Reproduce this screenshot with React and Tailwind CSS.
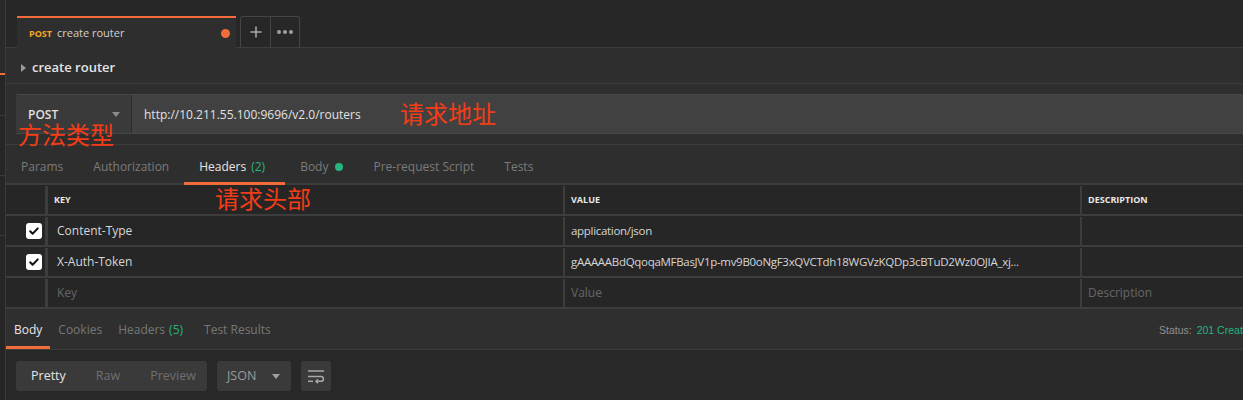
import React from 'react';

function Check() {
  return (
    <span className="flex h-4 w-4 items-center justify-center rounded-[3px] bg-white">
      <svg width="12" height="12" viewBox="0 0 12 12" fill="none">
        <path d="M2.2 6.3l2.4 2.4L9.8 3.4" stroke="#111" strokeWidth="2" strokeLinecap="round" strokeLinejoin="round" />
      </svg>
    </span>
  );
}

function Sidebar() {
  return (
    <div className="flex w-[6px] shrink-0 flex-col border-r border-[#3b3b3b] bg-[#262626]">
      <div className="h-[73px] bg-[#2a2a2a]" />
      <div className="h-[2px] bg-[#f26b3a]" />
      <div className="h-[41px] border-b border-[#3a3a3a]" />
      <div className="h-[60px] border-b border-[#3a3a3a]" />
      <div className="h-[60px] border-b border-[#3a3a3a]" />
      <div className="flex-1" />
    </div>
  );
}

const reqTabs = [
  { label: 'Params' },
  { label: 'Authorization' },
  { label: 'Headers', count: '(2)', active: true },
  { label: 'Body', dot: true },
  { label: 'Pre-request Script' },
  { label: 'Tests' },
];

const rows = [
  { checked: true, k: 'Content-Type', v: 'application/json' },
  { checked: true, k: 'X-Auth-Token', v: 'gAAAAABdQqoqaMFBasJV1p-mv9B0oNgF3xQVCTdh18WGVzKQDp3cBTuD2Wz0OJIA_xj...' },
];

function Row({ children, head }) {
  return (
    <div className={`flex h-[31px] border-b-2 border-[#3d3d3d] pt-[1px] ${head ? 'font-bold' : ''}`}>{children}</div>
  );
}

export default function App() {
  return (
    <div className="relative flex h-[400px] w-[1243px] overflow-hidden bg-[#2e2e2e] font-['Open_Sans',sans-serif] text-[#cfcfcf]">
      <Sidebar />
      <div className="flex min-w-0 flex-1 flex-col">
        {/* tab bar */}
        <div className="flex h-[48px] shrink-0 items-end border-b border-[#3d3d3d] bg-[#272727] pl-[11px]">
          <div className="relative z-10 -mb-px flex h-[32px] w-[219px] items-center border-t-2 border-[#f26b3a] bg-[#2e2e2e] pl-[12px] pr-[6px] pt-[1px]">
            <span className="text-[9px] font-bold text-[#f5a623]">POST</span>
            <span className="ml-[5px] text-[11px] text-[#d0d0d0]">create router</span>
            <span className="ml-auto h-[9px] w-[9px] rounded-full bg-[#f26b3a]" />
          </div>
          <div className="ml-[4px] flex h-[31px] rounded-t-[3px] border border-b-0 border-[#454545]">
            <div className="flex w-[30px] items-center justify-center border-r border-[#454545]">
              <svg width="12" height="12" viewBox="0 0 12 12"><path d="M6 0.5v11M0.5 6h11" stroke="#a8a8a8" strokeWidth="1.6" /></svg>
            </div>
            <div className="flex w-[28px] items-center justify-center gap-[2px]">
              <span className="h-[4px] w-[4px] rounded-full bg-[#a0a0a0]" />
              <span className="h-[4px] w-[4px] rounded-full bg-[#a0a0a0]" />
              <span className="h-[4px] w-[4px] rounded-full bg-[#a0a0a0]" />
            </div>
          </div>
        </div>

        {/* title */}
        <div className="flex h-[36px] shrink-0 items-center border-b border-[#3d3d3d] pl-[15px] pt-[4px]">
          <svg width="5" height="8" viewBox="0 0 5 8"><path d="M0 0l5 4-5 4z" fill="#9a9a9a" /></svg>
          <span className="ml-[6px] text-[13px] font-semibold text-[#e4e4e4]">create router</span>
        </div>

        {/* url bar */}
        <div className="shrink-0 border-b border-[#3d3d3d] pb-[10px] pl-[10px] pt-[10px]">
          <div className="flex h-[40px] border-y border-[#474747]">
            <div className="flex w-[115px] items-center rounded-l-[3px] bg-[#3a3a3a] pl-[12px] pr-[11px] pt-[1px]">
              <span className="text-[12px] font-semibold text-[#e0e0e0]">POST</span>
              <svg className="ml-auto" width="8" height="5" viewBox="0 0 8 5"><path d="M0 0h8L4 5z" fill="#8a8a8a" /></svg>
            </div>
            <div className="flex flex-1 items-center border-l border-[#2e2e2e] bg-[#414141] pl-[12px] pt-[1px] text-[12px] text-[#e2e2e2]">
              http://10.211.55.100:9696/v2.0/routers
            </div>
          </div>
        </div>

        {/* request tabs */}
        <div className="flex h-[40px] shrink-0 items-stretch border-b-2 border-[#3d3d3d]">
          {reqTabs.map((t) => (
            <div
              key={t.label}
              className={`-mb-[2px] flex items-center gap-[5px] border-b-[3px] pl-[15px] pt-[6px] text-[12px] ${t.count ? 'pr-[20px]' : 'pr-[15px]'} ${t.active ? 'border-[#f26b3a] text-[#e6e6e6]' : 'border-transparent text-[#7b7b7b]'}`}
            >
              <span>{t.label}</span>
              {t.count && <span className="text-[#26b47f]">{t.count}</span>}
              {t.dot && <span className="ml-[2px] h-[8px] w-[8px] rounded-full bg-[#26b47f]" />}
            </div>
          ))}
        </div>

        {/* headers table */}
        <div className="shrink-0 bg-[#262626] text-[12px]">
          <Row head>
            <div className="w-[42px] shrink-0 border-r-[3px] border-[#3d3d3d]" />
            <div className="flex w-[517px] shrink-0 items-center border-r-2 border-[#3d3d3d] pl-[6px] text-[9px] text-[#e8e8e8]">KEY</div>
            <div className="flex w-[517px] shrink-0 items-center border-r-2 border-[#3d3d3d] pl-[6px] text-[9px] text-[#e8e8e8]">VALUE</div>
            <div className="flex flex-1 items-center pl-[6px] text-[9px] text-[#e8e8e8]">DESCRIPTION</div>
          </Row>
          {rows.map((r) => (
            <Row key={r.k}>
              <div className="flex w-[42px] shrink-0 items-center justify-end border-r-[3px] border-[#3d3d3d] pr-[3px]">
                <Check />
              </div>
              <div className="flex w-[517px] shrink-0 items-center border-r-2 border-[#3d3d3d] pl-[9px] text-[#d6d6d6]">{r.k}</div>
              <div className="flex w-[517px] shrink-0 items-center truncate border-r-2 border-[#3d3d3d] pl-[6px] text-[11.5px] tracking-[-0.3px] text-[#d6d6d6]">{r.v}</div>
              <div className="flex-1" />
            </Row>
          ))}
          <Row>
            <div className="w-[42px] shrink-0 border-r-[3px] border-[#3d3d3d]" />
            <div className="flex w-[517px] shrink-0 items-center border-r-2 border-[#3d3d3d] pl-[9px] text-[#666]">Key</div>
            <div className="flex w-[517px] shrink-0 items-center border-r-2 border-[#3d3d3d] pl-[6px] text-[#666]">Value</div>
            <div className="flex flex-1 items-center pl-[6px] text-[#666]">Description</div>
          </Row>
        </div>

        {/* response tabs */}
        <div className="flex h-[41px] shrink-0 items-stretch border-b border-[#3d3d3d] bg-[#2f2f2f]">
          <div className="flex flex-1 items-stretch">
            <div className="flex items-center border-b-[3px] border-[#f26b3a] px-[8px] pt-[5px] text-[12px] text-[#e6e6e6]">Body</div>
            <div className="flex items-center border-b-[3px] border-transparent px-[8px] pt-[5px] text-[12px] text-[#777]">Cookies</div>
            <div className="flex items-center gap-[4px] border-b-[3px] border-transparent px-[8px] pt-[5px] text-[12px] text-[#777]">
              Headers <span className="text-[#26b47f]">(5)</span>
            </div>
            <div className="ml-[5px] flex items-center border-b-[3px] border-transparent px-[8px] pt-[5px] text-[12px] text-[#777]">Test Results</div>
          </div>
          <div className="flex w-[84px] shrink-0 items-center whitespace-nowrap pt-[3px] font-['Liberation_Sans',sans-serif] text-[10.5px]">
            <span className="text-[#8f8f8f]">Status:</span>
            <span className="ml-[5px] text-[#26b47f]">201 Created</span>
          </div>
        </div>

        {/* response toolbar */}
        <div className="flex flex-1 items-start gap-[10px] bg-[#282828] pl-[10px] pt-[11px]">
          <div className="flex h-[30px] w-[191px] items-center rounded-[3px] bg-[#3a3a3a] text-[12.5px]">
            <span className="pl-[15px] text-[#e4e4e4]">Pretty</span>
            <span className="pl-[30px] text-[#6f6f6f]">Raw</span>
            <span className="pl-[30px] text-[#6f6f6f]">Preview</span>
          </div>
          <div className="flex h-[30px] w-[74px] items-center rounded-[3px] bg-[#3a3a3a] pl-[10px] pr-[11px] text-[12.5px] text-[#9a9a9a]">
            JSON
            <svg className="ml-auto" width="8" height="5" viewBox="0 0 8 5"><path d="M0 0h8L4 5z" fill="#a0a0a0" /></svg>
          </div>
          <div className="flex h-[30px] w-[30px] items-center justify-center rounded-[3px] bg-[#3a3a3a]">
            <svg width="18" height="15" viewBox="0 0 18 15" fill="none" stroke="#a8a8a8" strokeWidth="1.5">
              <path d="M1 2h16" />
              <path d="M1 7.5h13a2.4 2.4 0 0 1 0 4.8H9" />
              <path d="M11 10.3l-2 2 2 2" />
              <path d="M1 12.3h5" />
            </svg>
          </div>
        </div>
      </div>

      {/* red annotations drawn on top of the screenshot */}
      <div className="pointer-events-none absolute left-[18px] top-[122px] font-['Noto_Sans_CJK_SC',sans-serif] text-[24px] leading-none text-[#f43d17]">方法类型</div>
      <div className="pointer-events-none absolute left-[400px] top-[101px] font-['Noto_Sans_CJK_SC',sans-serif] text-[24px] leading-none text-[#f43d17]">请求地址</div>
      <div className="pointer-events-none absolute left-[215px] top-[186px] font-['Noto_Sans_CJK_SC',sans-serif] text-[24px] leading-none text-[#f43d17]">请求头部</div>
    </div>
  );
}
